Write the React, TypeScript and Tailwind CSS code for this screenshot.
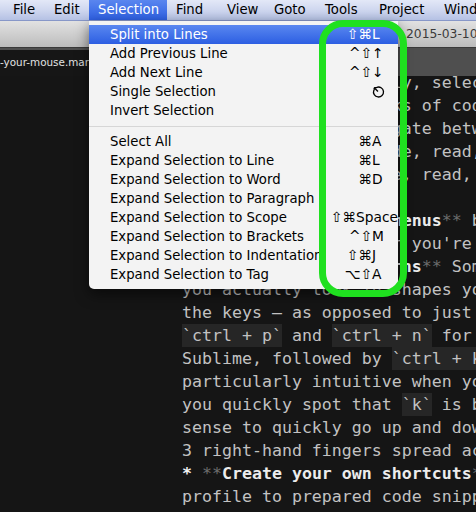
import React from "react";

type Seg = { t: string; s?: "b" | "m" | "c" | "w" };

const SANS = "font-['DejaVu_Sans',sans-serif]";
const MONO = "font-['DejaVu_Sans_Mono',monospace]";

const menuBar = [
  { label: "File", w: "w-[41px]" },
  { label: "Edit", w: "w-[44px]" },
  { label: "Selection", w: "w-[78px]", open: true },
  { label: "Find", w: "w-[51px]" },
  { label: "View", w: "w-[47px]" },
  { label: "Goto", w: "w-[51px]" },
  { label: "Tools", w: "w-[54px]" },
  { label: "Project", w: "w-[65px]" },
  { label: "Window", w: "w-[80px]" },
];

const lines: Seg[][] = [
  [{ t: "section of text quickly, selecting" }],
  [{ t: "ting, commenting blocks of code" }],
  [{ t: "code and quickly navigate between" }],
  [{ t: "- you can navigate code, read, write" }],
  [{ t: "and you can write code, read, edit" }],
  [{ t: "your editor skills." }],
  [
    { t: "* ", s: "w" },
    { t: "**", s: "m" },
    { t: "Use keyboard for menus", s: "b" },
    { t: "**", s: "m" },
    { t: " both" },
  ],
  [{ t: "that is handy whenever you're in" }],
  [
    { t: "* ", s: "w" },
    { t: "**", s: "m" },
    { t: "Learn these patterns", s: "b" },
    { t: "**", s: "m" },
    { t: " Some" },
  ],
  [{ t: "you actually took in shapes you" }],
  [{ t: "the keys – as opposed to just" }],
  [{ t: "`ctrl + p`", s: "c" }, { t: " and " }, { t: "`ctrl + n`", s: "c" }, { t: " for" }],
  [{ t: "Sublime, followed by " }, { t: "`ctrl + k`", s: "c" }],
  [{ t: "particularly intuitive when you" }],
  [{ t: "you quickly spot that " }, { t: "`k`", s: "c" }, { t: " is between" }],
  [{ t: "sense to quickly go up and down" }],
  [{ t: "3 right-hand fingers spread across" }],
  [
    { t: "* ", s: "w" },
    { t: "**", s: "m" },
    { t: "Create your own shortcuts", s: "b" },
    { t: "**", s: "m" },
  ],
  [{ t: "profile to prepared code snippets" }],
  [{ t: "including templates for posts" }],
];

type Item =
  | { sep: true }
  | { sep?: false; label: string; mods?: string; key?: React.ReactNode; wide?: boolean; active?: boolean };

function EscGlyph() {
  return (
    <svg width="13" height="13" viewBox="0 0 13 13" fill="none" stroke="currentColor" strokeWidth="1.3">
      <path d="M4.8 2.3 A5 5 0 1 1 1.8 5.3" />
      <path d="M6 6.5 L2.2 2.7" />
      <path d="M2.2 2.7 L5 2.7 M2.2 2.7 L2.2 5.5" />
    </svg>
  );
}

const items: Item[] = [
  { label: "Split into Lines", mods: "⇧⌘", key: "L", active: true },
  { label: "Add Previous Line", mods: "^⇧", key: "↑" },
  { label: "Add Next Line", mods: "^⇧", key: "↓" },
  { label: "Single Selection", mods: "", key: <EscGlyph /> },
  { label: "Invert Selection" },
  { sep: true },
  { label: "Select All", mods: "⌘", key: "A" },
  { label: "Expand Selection to Line", mods: "⌘", key: "L" },
  { label: "Expand Selection to Word", mods: "⌘", key: "D" },
  { label: "Expand Selection to Paragraph" },
  { label: "Expand Selection to Scope", mods: "⇧⌘", key: "Space", wide: true },
  { label: "Expand Selection to Brackets", mods: "^⇧", key: "M" },
  { label: "Expand Selection to Indentation", mods: "⇧⌘", key: "J" },
  { label: "Expand Selection to Tag", mods: "⌥⇧", key: "A" },
];

function segClass(s?: Seg["s"]) {
  if (s === "b") return "font-bold text-[#ececec]";
  if (s === "m") return "text-[#6c6c6c]";
  if (s === "w") return "font-bold text-[#f2f2f2]";
  if (s === "c") return "inline-block h-[23px] align-top bg-[#262626] text-[#c2c2c2]";
  return "text-[#c2c2c2]";
}

export default function App() {
  return (
    <div className={`relative w-[476px] h-[512px] overflow-hidden bg-[#151515] flex flex-col ${SANS}`}>
      {/* menu bar */}
      <div className="h-[21px] shrink-0 flex items-stretch pl-[4px] bg-gradient-to-b from-[#e3e8f7] via-[#cfd7ef] to-[#b5c1e4] border-b border-[#8797c8] text-[13.25px] text-black whitespace-nowrap">
        {menuBar.map((m) => (
          <div
            key={m.label}
            className={`${m.w} shrink-0 flex items-center pl-[9px] ${
              m.open ? "bg-gradient-to-b from-[#5a86ef] to-[#2e5fe2] text-white" : ""
            }`}
          >
            {m.label}
          </div>
        ))}
      </div>

      {/* window title */}
      <div className="h-[26px] shrink-0 flex items-center pl-[406px] bg-gradient-to-b from-[#e2e2e2] to-[#bcbcbc] text-[12.3px] text-[#3a3a3a] whitespace-nowrap overflow-hidden">
        2015-03-10-ditch-your-mouse.markdown
      </div>

      {/* tab bar */}
      <div className="h-[29px] shrink-0 flex items-end bg-[#4f4f4f] border-t border-[#3a3a3a]">
        <div className="h-[26px] w-[260px] bg-[#161616] flex items-center text-[10.4px] text-[#e2e2e2] whitespace-nowrap overflow-hidden">
          -your-mouse.markdown
        </div>
      </div>

      {/* editor */}
      <div className={`flex-1 overflow-hidden pl-[182px] ${MONO} text-[16.6px]`}>
        <div className="mt-[-5.5px]">
          {lines.map((l, i) => (
            <div key={i} className="h-[23px] leading-[23px] whitespace-pre">
              {l.map((s, j) => (
                <span key={j} className={segClass(s.s)}>
                  {s.t}
                </span>
              ))}
            </div>
          ))}
        </div>
      </div>

      {/* open menu */}
      <div className="absolute z-10 left-[89px] top-[21px] w-[309px] pt-[4px] pb-[5px] bg-[#f3f3f3] rounded-b-[5px] shadow-[0_5px_14px_rgba(0,0,0,0.55)] text-[13.25px] text-black whitespace-nowrap">
        {items.map((it, i) =>
          it.sep ? (
            <div key={i} className="h-[12px] flex items-center">
              <div className="h-px w-full bg-[#d6d6d6]" />
            </div>
          ) : (
            <div
              key={i}
              className={`h-[19px] flex items-center pl-[21px] pr-[4px] ${
                it.active ? "bg-gradient-to-b from-[#5a87f0] to-[#2c5ee2] text-white" : ""
              }`}
            >
              <span className="flex-1">{it.label}</span>
              {it.key !== undefined && (
                <span className="flex items-center text-[13.75px]">
                  <span className="text-right">{it.mods}</span>
                  <span className={`${it.wide ? "w-[38px]" : "w-[22px]"} flex items-center`}>{it.key}</span>
                </span>
              )}
            </div>
          )
        )}
      </div>

      {/* highlight ring */}
      <div className="absolute z-20 left-[319px] top-[20px] w-[88px] h-[277px] border-[7px] border-[#1fe01f] rounded-[24px]" />
    </div>
  );
}
